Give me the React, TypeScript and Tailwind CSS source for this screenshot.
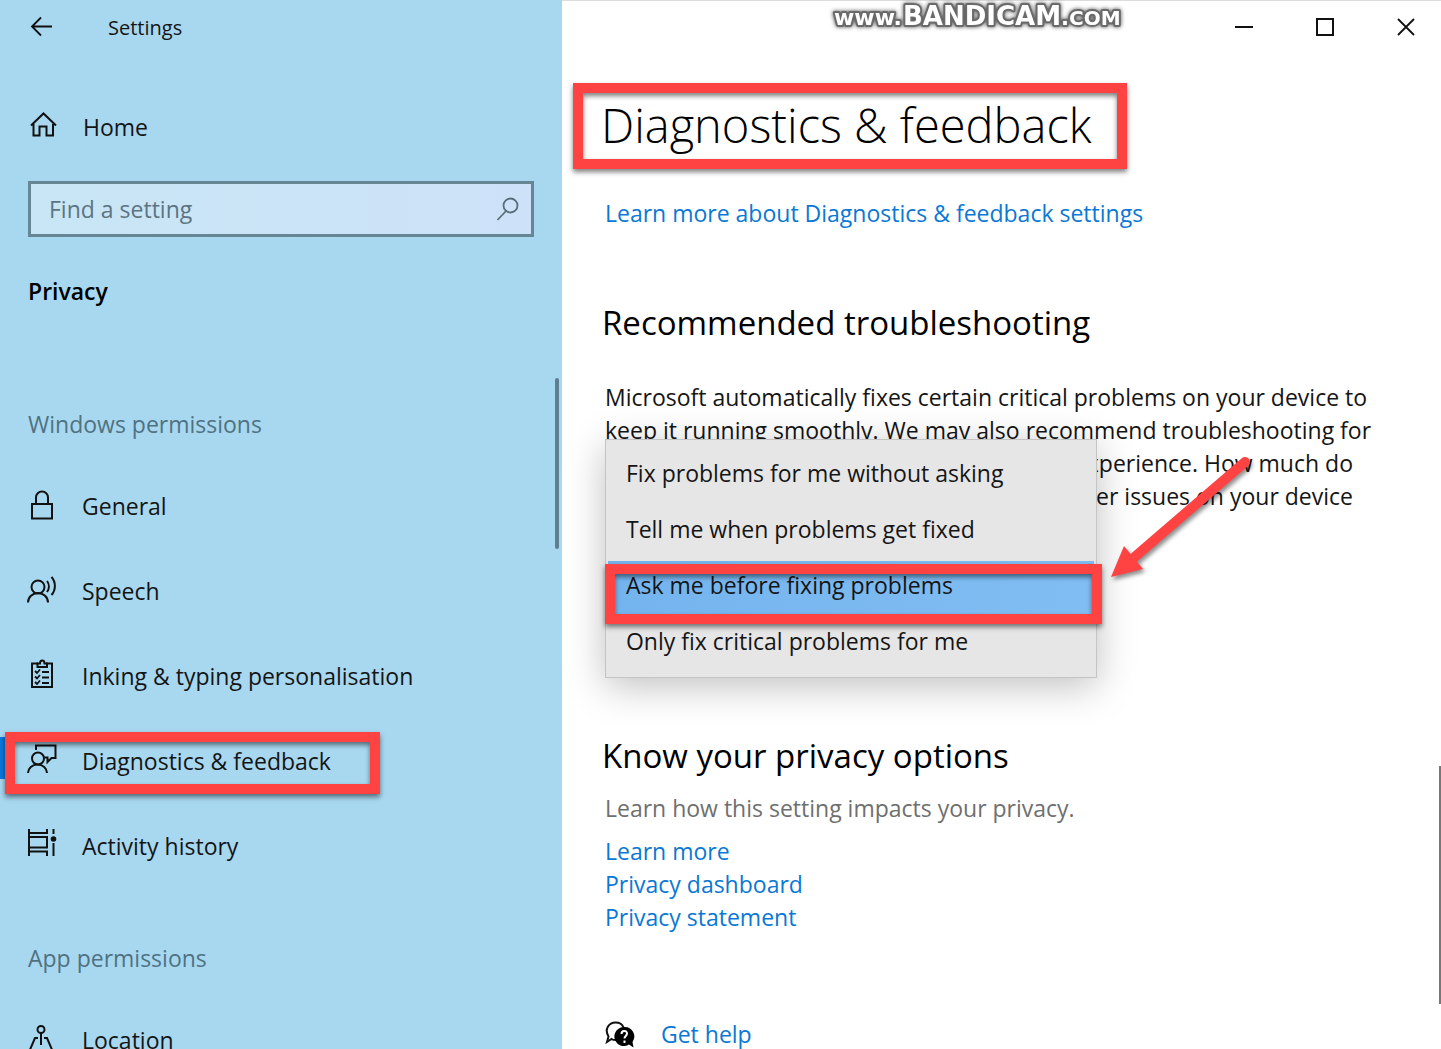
import type { ReactNode } from "react";

const RED_BOX =
  "pointer-events-none absolute border-[10px] border-[#ff4343] shadow-[0_3px_5px_rgba(0,0,0,0.5),inset_0_3px_5px_rgba(0,0,0,0.5)]";

function Icon({ children, top = 3 }: { children: ReactNode; top?: number }) {
  return (
    <svg
      width="32"
      height="32"
      viewBox={`0 ${top} 32 32`}
      fill="none"
      stroke="#111"
      strokeWidth="2"
      className="shrink-0 overflow-visible"
      aria-hidden="true"
    >
      {children}
    </svg>
  );
}

const BackIcon = () => (
  <Icon top={0}>
    <path d="M26 14.500H6M15 5.500l-9 9 9 9" strokeWidth="1.800" />
  </Icon>
);

const HomeIcon = () => (
  <Icon>
    <path d="M5 17.500 17.500 5.500 30 17.500M7.500 16v11.500h6V18.500h7v9h6.500V16" />
  </Icon>
);

const LockIcon = () => (
  <Icon>
    <path d="M6 16h20v14.500H6zM10 16V9.500a6 6 0 0 1 12 0V16" />
  </Icon>
);

const SpeechIcon = () => (
  <Icon>
    <circle cx="12" cy="14" r="6.500" />
    <path d="M2 29.500a10 9.500 0 0 1 20 0M21 8a9 9 0 0 1 0 11M25.500 4c4.500 5 4.500 13 0 18" />
  </Icon>
);

const ClipboardIcon = () => (
  <Icon>
    <path d="M12 5.500H6v23.500h20v-23.500h-6" />
    <path d="M11.500 9v-3.500h2.500c0-4 4.500-4 4.500 0h2.500V9z" />
    <path d="m9 13 2 2 3-3.500M9 18.500l2 2 3-3.500M9 24l2 2 3-3.500" strokeWidth="1.800" />
    <path d="M16 14h7M16 19.500h7M16 25h7" />
  </Icon>
);

const FeedbackIcon = () => (
  <Icon>
    <circle cx="12" cy="15.500" r="6" />
    <path d="M2 30a9.500 8.500 0 0 1 19 0" />
    <path d="M10 7V2.500h19.500v12.500h-4L21.500 19v-4.500h-3" />
  </Icon>
);

const ActivityIcon = () => (
  <Icon>
    <path d="M3 1v4h18V1M3 28v-4.500h18V28M3 9h18v10.500H3zM3 5v19M21 9v10.500M27.500 1v5M27.500 15v13" />
    <circle cx="27.500" cy="11" r="2.800" fill="#111" stroke="none" />
  </Icon>
);

const LocationIcon = () => (
  <Icon>
    <circle cx="15" cy="7.500" r="3.500" />
    <path d="M15 11v12M12 16H9L3 30h24l-6-14h-3" />
  </Icon>
);

function NavItem({ icon, label, active }: { icon: ReactNode; label: string; active?: boolean }) {
  return (
    <li className="relative">
      <a
        href="#"
        aria-current={active ? "page" : undefined}
        className="flex h-[85px] items-center gap-6 pl-[26px]"
      >
        {icon}
        <span>{label}</span>
      </a>
      {active && (
        <>
          <span className="absolute left-0 top-[18px] h-[42px] w-[6px] bg-[#0a78dc]" />
          <span className={`${RED_BOX} left-[5px] top-[13px] h-[62px] w-[375px]`} />
        </>
      )}
    </li>
  );
}

function Sidebar() {
  return (
    <aside className="relative flex w-[39%] shrink-0 flex-col overflow-hidden bg-[#a8d8f0]">
      <div className="flex h-14 shrink-0 items-center gap-[50px] pl-[26px] text-[20px]">
        <button type="button" aria-label="Back">
          <BackIcon />
        </button>
        <span>Settings</span>
      </div>
      <a href="#" className="mt-[43px] flex h-14 shrink-0 items-center gap-[25px] pl-[26px]">
        <HomeIcon />
        <span>Home</span>
      </a>
      <label className="mx-7 mt-[26px] flex h-14 shrink-0 items-center border-[3px] border-[#668595] bg-gradient-to-r from-[#c8e6f5] to-[#cde2f8] pl-[18px] pr-3">
        <input
          type="text"
          aria-label="Find a setting"
          placeholder="Find a setting"
          className="min-w-0 flex-1 bg-transparent outline-none placeholder:text-[#5d7482]"
        />
        <svg width="24" height="26" viewBox="0 0 24 26" fill="none" stroke="#5a6d7a" strokeWidth="1.800" aria-hidden="true">
          <circle cx="15.500" cy="9.500" r="7" />
          <path d="m11 15-8.500 9" />
        </svg>
      </label>
      <h2 className="mt-9 shrink-0 pl-7 font-semibold leading-9 text-black">Privacy</h2>
      <h3 className="mt-[97px] shrink-0 pl-7 leading-9 text-[#4f7282]">Windows permissions</h3>
      <ul className="mt-[22px] shrink-0">
        <NavItem icon={<LockIcon />} label="General" />
        <NavItem icon={<SpeechIcon />} label="Speech" />
        <NavItem icon={<ClipboardIcon />} label="Inking & typing personalisation" />
        <NavItem icon={<FeedbackIcon />} label="Diagnostics & feedback" active />
        <NavItem icon={<ActivityIcon />} label="Activity history" />
      </ul>
      <h3 className="mt-[51px] shrink-0 pl-7 leading-9 text-[#4f7282]">App permissions</h3>
      <ul className="mt-[22px] shrink-0">
        <NavItem icon={<LocationIcon />} label="Location" />
      </ul>
      <span className="absolute right-[3px] top-[378px] h-[171px] w-1 rounded-sm bg-[#5f7f90]" />
    </aside>
  );
}

function Watermark() {
  return (
    <svg
      width="304"
      height="36"
      viewBox="0 0 304 36"
      className="absolute left-[267px] top-0 drop-shadow-[0_0_2px_rgba(0,0,0,0.7)]"
    >
      <g
        fontFamily='"DejaVu Sans", sans-serif'
        fontWeight="700"
        fill="#fff"
        stroke="#6a6a6a"
        strokeWidth="4"
        strokeLinejoin="round"
        style={{ paintOrder: "stroke" }}
      >
        <text x="5" y="25" fontSize="22">www.</text>
        <text x="74" y="25" fontSize="26">BANDICAM</text>
        <text x="232" y="25" fontSize="21">.<tspan fontSize="20">COM</tspan></text>
      </g>
    </svg>
  );
}

function WindowButtons() {
  return (
    <div className="flex justify-end gap-[11px]">
      <button type="button" aria-label="Minimise" className="flex h-[54px] w-[70px] items-center justify-center">
        <svg width="20" height="20" stroke="#111" strokeWidth="2"><path d="M1 10h18" /></svg>
      </button>
      <button type="button" aria-label="Maximise" className="flex h-[54px] w-[70px] items-center justify-center">
        <svg width="20" height="20" fill="none" stroke="#111" strokeWidth="2"><path d="M2 2h16v16H2z" /></svg>
      </button>
      <button type="button" aria-label="Close" className="flex h-[54px] w-[70px] items-center justify-center">
        <svg width="20" height="20" stroke="#111" strokeWidth="1.800"><path d="m2 2 16 16M18 2 2 18" /></svg>
      </button>
    </div>
  );
}

const OPTIONS = [
  "Fix problems for me without asking",
  "Tell me when problems get fixed",
  "Ask me before fixing problems",
  "Only fix critical problems for me",
];

function OptionsMenu() {
  return (
    <div
      role="listbox"
      aria-label="Recommended troubleshooting"
      className="absolute left-0 top-[58px] w-[492px] border border-[#c4c4c4] bg-[#e6e6e6] px-[2px] pb-1 pt-[9px] shadow-[0_8px_36px_rgba(0,0,0,0.25)]"
    >
      {OPTIONS.map((option, i) => (
        <button
          key={option}
          type="button"
          role="option"
          aria-selected={i === 2}
          className={
            i === 2
              ? "block h-14 w-full bg-gradient-to-r from-[#74b4ee] to-[#80bdf2] pb-2 pl-[18px] text-left"
              : "block h-14 w-full pb-2 pl-[18px] text-left"
          }
        >
          {option}
        </button>
      ))}
      <span className={`${RED_BOX} -left-px top-[124px] h-[60px] w-[497px]`} />
      <svg
        width="160"
        height="140"
        viewBox="0 0 160 140"
        className="pointer-events-none absolute left-[494px] top-[10px] drop-shadow-[2px_3px_2px_rgba(0,0,0,0.45)]"
      >
        <path d="M145 12 30 111" stroke="#ff4343" strokeWidth="10" strokeLinecap="round" />
        <path d="M11 127 24 96 43 119z" fill="#ff4343" />
      </svg>
    </div>
  );
}

function Content() {
  return (
    <main className="relative min-w-0 flex-1 overflow-hidden bg-white">
      <div className="absolute inset-x-0 top-0 h-px bg-[#dcdcdc]" />
      <Watermark />
      <WindowButtons />
      <div className="pl-[43px] pr-8">
        <div className="relative mt-[38px] h-[66px]">
          <h1 className="-ml-1 whitespace-nowrap text-[47px] font-light leading-[66px] text-black">
            Diagnostics &amp; feedback
          </h1>
          <span className={`${RED_BOX} -left-8 -top-[9px] h-[86px] w-[554px]`} />
        </div>
        <a href="#" className="mt-[39px] block leading-[33px] text-[#0a78d4]">
          Learn more about Diagnostics &amp; feedback settings
        </a>
        <h2 className="-ml-[3px] mt-[69px] text-[33px] leading-[48px] text-black">Recommended troubleshooting</h2>
        <div className="relative mt-[34px]">
          <p className="whitespace-nowrap leading-[33px]">
            Microsoft automatically fixes certain critical problems on your device to
            <br />
            keep it running smoothly. We may also recommend troubleshooting for
            <span className="block w-[748px] text-right">
              other problems that can impact your experience. How much do
              <br />
              you want Microsoft to help when we find other issues on your device
            </span>
          </p>
          <OptionsMenu />
        </div>
        <h2 className="-ml-[3px] mt-[219px] text-[33px] leading-[48px] text-black">Know your privacy options</h2>
        <p className="mt-3 leading-[33px] text-[#6f6f6f]">Learn how this setting impacts your privacy.</p>
        <div className="mt-[10px] flex flex-col items-start leading-[33px] text-[#0a78d4]">
          <a href="#">Learn more</a>
          <a href="#">Privacy dashboard</a>
          <a href="#">Privacy statement</a>
        </div>
        <a href="#" className="mt-[84px] flex items-center gap-[26px] leading-[33px] text-[#0a78d4]">
          <svg width="30" height="30" viewBox="0 0 30 30" aria-hidden="true">
            <path d="M11 20c-2 0-3 0-4.500-1L2 22l1.500-5.500C-1 9 4 2.500 10.500 2.500c4 0 7 2 8 5" fill="none" stroke="#111" strokeWidth="2" />
            <path d="M19 7a9.500 9.500 0 1 0 5 17.500l4.500 3-1-5.500A9.500 9.500 0 0 0 19 7z" fill="#000" />
            <path d="M16.500 14c0-4 5.500-4 5.500-.5 0 2.500-2.500 2.500-2.500 5M19.500 20.500v2.500" fill="none" stroke="#fff" strokeWidth="2" />
          </svg>
          Get help
        </a>
      </div>
      <span className="absolute right-0 top-[766px] h-[238px] w-[2px] bg-[#777]" />
    </main>
  );
}

export default function App() {
  return (
    <div className="flex h-screen overflow-hidden font-['Open_Sans','Noto_Sans',sans-serif] text-[23px] text-[#151515]">
      <Sidebar />
      <Content />
    </div>
  );
}
